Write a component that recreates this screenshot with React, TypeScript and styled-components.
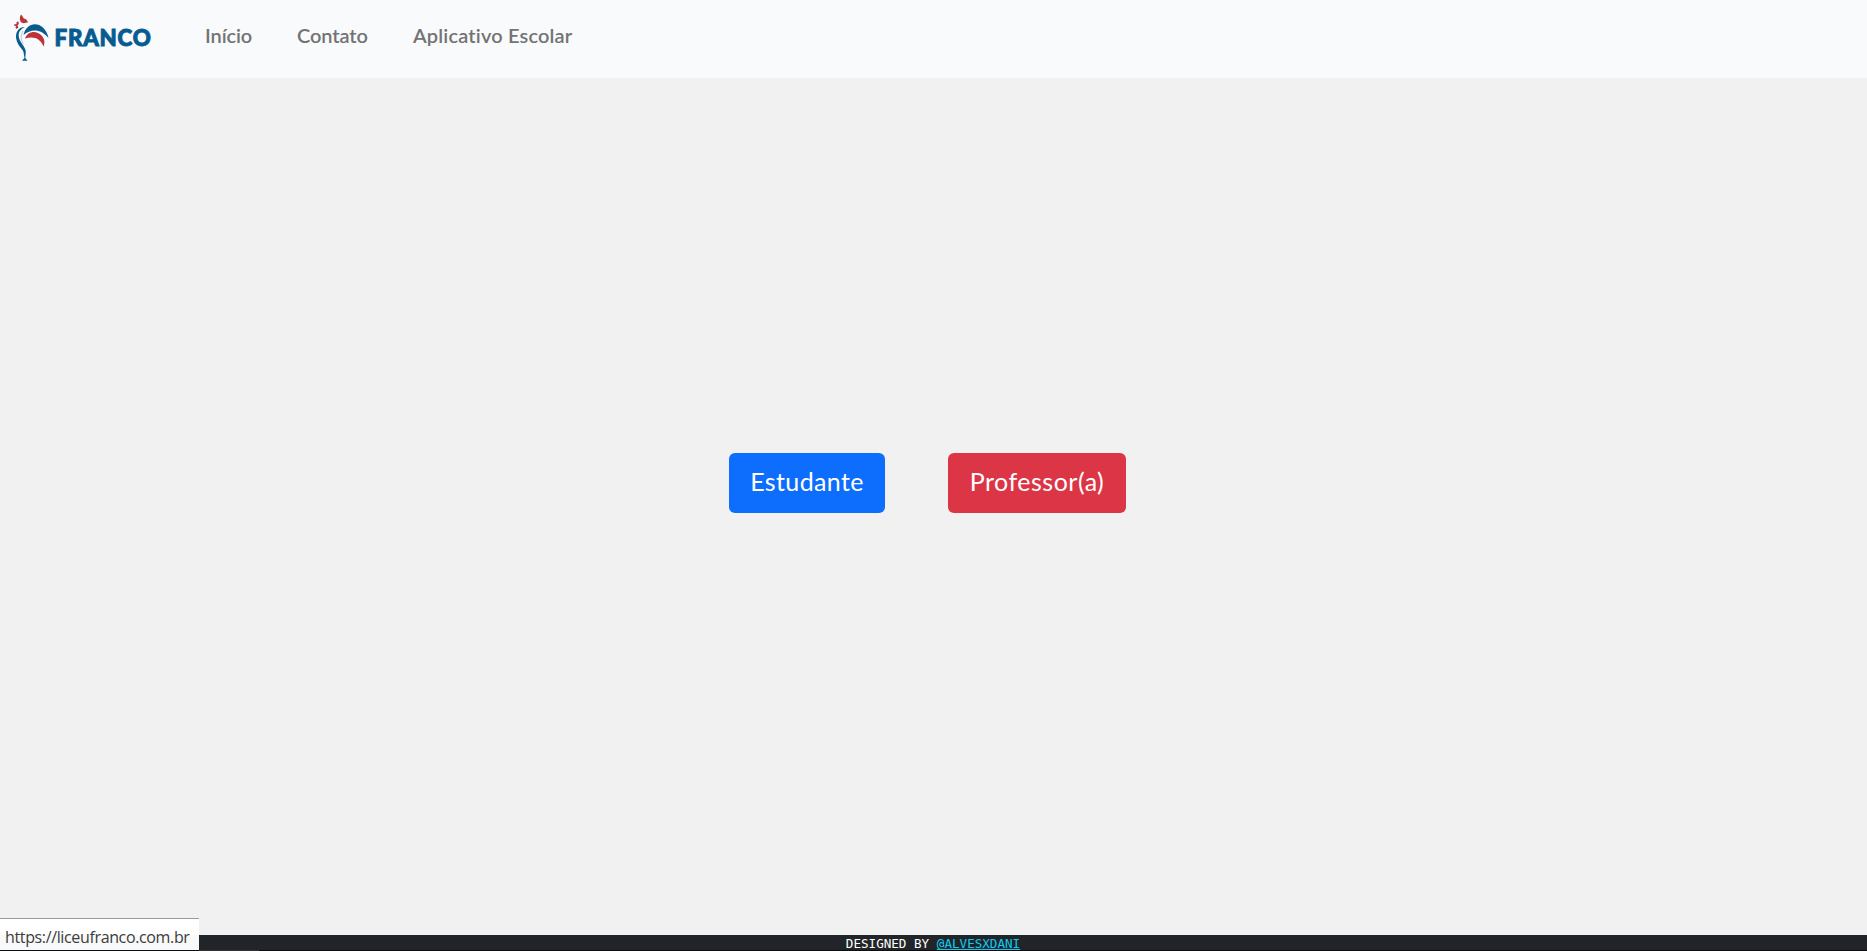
import React from "react";
import styled, { createGlobalStyle } from "styled-components";

const GlobalStyle = createGlobalStyle`
  *, *::before, *::after { box-sizing: border-box; }
  body { margin: 0; background: #f1f1f1; font-family: "Open Sans", "Noto Sans", sans-serif; overflow: hidden; }
`;

const Page = styled.div`
  display: flex;
  flex-direction: column;
  height: 100vh;
`;

const Navbar = styled.nav`
  display: flex;
  align-items: flex-start;
  height: 78px;
  padding-left: 14px;
  background: #f8fafc;
`;

const Brand = styled.a`
  display: block;
  width: 140px;
  height: 62px;
  margin-top: 8px;
  text-decoration: none;
`;

const NavList = styled.ul`
  display: flex;
  gap: 46px;
  margin: 20px 0 0 51px;
  padding: 0;
  list-style: none;
`;

const NavLink = styled.a<{ $width: number; $tracking: number }>`
  display: block;
  width: ${(p) => p.$width}px;
  font: 600 20px/30px Lato, sans-serif;
  font-variant-ligatures: none;
  letter-spacing: ${(p) => p.$tracking}px;
  white-space: nowrap;
  color: #737373;
  text-decoration: none;
`;

const Main = styled.main`
  display: flex;
  flex: 1;
  align-items: center;
  justify-content: center;
  gap: 63px;
  padding: 0 13px 47px 0;
`;

const Button = styled.button<{ $color: string; $width: number; $tracking: number }>`
  width: ${(p) => p.$width}px;
  height: 60px;
  padding: 0 0 5px 1px;
  border: 0;
  border-radius: 6px;
  background: ${(p) => p.$color};
  color: #fff;
  font: 400 25px/36px Lato, sans-serif;
  font-variant-ligatures: none;
  letter-spacing: ${(p) => p.$tracking}px;
  white-space: nowrap;
`;

const Footer = styled.footer`
  height: 16px;
  padding-right: 1px;
  border-bottom: 1px solid #0b0d0f;
  background: #212529;
  color: #fff;
  font: 12.6px/17px "DejaVu Sans Mono", monospace;
  text-align: center;
  white-space: pre;

  a { color: #0dcaf0; text-decoration-thickness: 1px; text-underline-offset: 1px; text-decoration-skip-ink: none; }
`;

const StatusBubble = styled.div`
  position: absolute;
  left: 0;
  bottom: 1px;
  width: 199px;
  height: 32px;
  padding-left: 5px;
  border-top: 1px solid #9a9a9a;
  background: linear-gradient(#fff 16px, #f9f9f9 16px);
  color: #3c3c3c;
  font: 16px/36px "Open Sans", sans-serif;
  letter-spacing: -0.36px;
  white-space: nowrap;
`;

const BottomEdge = styled.div`
  position: absolute;
  left: 199px;
  bottom: 0;
  width: 60px;
  height: 1px;
  background: #303234;
`;

const Logo = () => (
  <svg width="140" height="62" viewBox="14 8 140 62" aria-label="Franco">
    <g fill="#bb3439">
      <path d="M21 14.4C22.500 15.500 23 17.500 24 18.600C26 19 27.500 20.500 28 22.500C26 22.500 24 24 21.500 22.500C19.300 20.500 19.500 17 21 14.400Z" />
      <path d="M16.500 22L18.500 21.500L18.800 24L17.500 25.500L18.500 27.500L16.500 29L15.500 27.500L16 25.800L14 26L14.500 24.200L16.500 24Z" />
      <path d="M25 38.500C28 30.500 37 30.500 41.500 35.500C44.800 39 45 43 43.500 46.500C41 39 34 35.500 25 38.500Z" />
    </g>
    <g fill="#075b90">
      <path d="M23.500 35C27 19.500 45 21 48.500 38C41 28.500 31 28.500 23.500 35Z" />
      <path d="M25 27C18 27 14.800 33 16.500 40C18 46 22 48 23.500 52L24.500 58L22 60.800L27.500 60.800L25.300 58L25.800 51C24.500 45 19 42 18.700 36C18.500 31 21 29 25 27Z" />
    </g>
    <path d="M23 31C20.500 35 20.500 40 23.500 44" fill="none" stroke="#8db4cc" strokeWidth=".7" />
    <text x="54.500" y="46" fill="#075b90" stroke="#075b90" strokeWidth="1" fontFamily="Lato, sans-serif" fontSize="22.800" fontWeight="900" letterSpacing=".8" textLength="97" lengthAdjust="spacingAndGlyphs">FRANCO</text>
  </svg>
);

const App = () => (
  <>
    <GlobalStyle />
    <Page>
      <Navbar>
        <Brand href="#"><Logo /></Brand>
        <NavList>
          <li><NavLink href="#" $width={46} $tracking={-0.1}>Início</NavLink></li>
          <li><NavLink href="#" $width={70} $tracking={-0.1}>Contato</NavLink></li>
          <li><NavLink href="#" $width={160} $tracking={0.17}>Aplicativo Escolar</NavLink></li>
        </NavList>
      </Navbar>
      <Main>
        <Button $color="#0d6efd" $width={156} $tracking={0.35}>Estudante</Button>
        <Button $color="#dc3545" $width={178} $tracking={0.5}>Professor(a)</Button>
      </Main>
      <Footer>DESIGNED BY <a href="#">@ALVESXDANI</a></Footer>
    </Page>
    <BottomEdge />
    <StatusBubble>https://liceufranco.com.br</StatusBubble>
  </>
);

export default App;
